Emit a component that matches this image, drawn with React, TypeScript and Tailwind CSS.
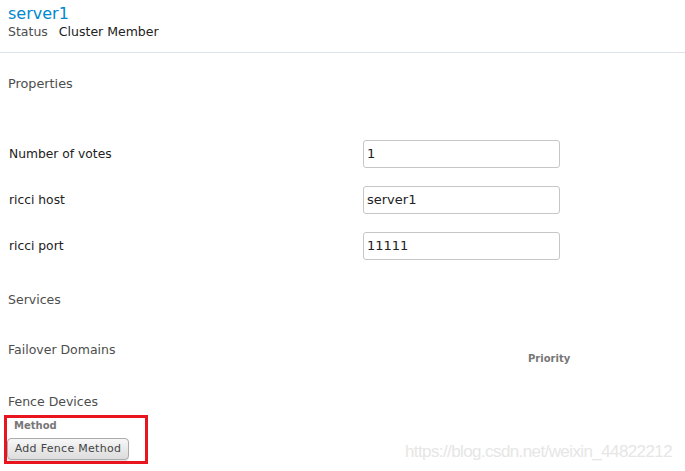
const rows = [
  { label: 'Number of votes', value: '1' },
  { label: 'ricci host', value: 'server1' },
  { label: 'ricci port', value: '11111' },
];

export default function App() {
  return (
    <div className="relative w-[685px] h-[471px] overflow-hidden bg-white font-['DejaVu_Sans',sans-serif] text-[#333]">
      <div className="h-[53px] border-b border-[#dde3e8] px-2 pt-[3px]">
        <div className="text-[16px] leading-[21px] text-[#0088ce]">server1</div>
        <div className="flex text-[12.5px] leading-[16px]">
          <span className="text-[#4d4d4d]">Status</span>
          <span className="ml-[11px] text-[#222]">Cluster Member</span>
        </div>
      </div>

      <div className="px-2 mt-[23px] text-[12.8px] leading-[16px] text-[#4d4d4d]">Properties</div>

      <div className="mt-[48px] flex flex-col gap-[18px]">
        {rows.map((r) => (
          <div key={r.label} className="flex items-center h-[28px]">
            <div className="w-[363px] pl-[9px] text-[12.3px] leading-[16px] text-[#222]">{r.label}</div>
            <div className="w-[197px] h-[28px] border border-[#c6c6c6] rounded-[3px] flex items-center pl-[3px] text-[13px] text-[#222]">
              {r.value}
            </div>
          </div>
        ))}
      </div>

      <div className="px-2 mt-[32px] text-[12.5px] leading-[16px] text-[#4d4d4d]">Services</div>

      <div className="mt-[34px] flex items-start h-[16px] pl-2">
        <div className="w-[520px] text-[12.5px] leading-[16px] text-[#4d4d4d]">Failover Domains</div>
        <div className="mt-[11px] text-[10px] leading-[12px] font-bold text-[#777]">Priority</div>
      </div>

      <div className="px-2 mt-[36px] text-[12.5px] leading-[16px] text-[#4d4d4d]">Fence Devices</div>

      <div className="ml-[4px] mt-[5px] w-[144px] h-[49px] border-[3px] border-[#e8141e] pt-[2px]">
        <div className="ml-[7px] text-[10px] leading-[12px] font-bold text-[#777]">Method</div>
        <button className="mt-[6px] h-[22px] w-[122px] rounded-[4px] border border-[#ababab] bg-gradient-to-b from-[#f7f7f7] to-[#dcdcdc] text-[11px] leading-[20px] tracking-[0.3px] text-[#444] shadow-[0_1px_1px_rgba(0,0,0,0.12)]">
          Add Fence Method
        </button>
      </div>

      <div className="absolute left-[405px] top-[442px] font-['Liberation_Sans',sans-serif] text-[17px] leading-[20px] tracking-[-0.6px] text-[#e6e6e6]">
        https://blog.csdn.net/weixin_44822212
      </div>
    </div>
  );
}
